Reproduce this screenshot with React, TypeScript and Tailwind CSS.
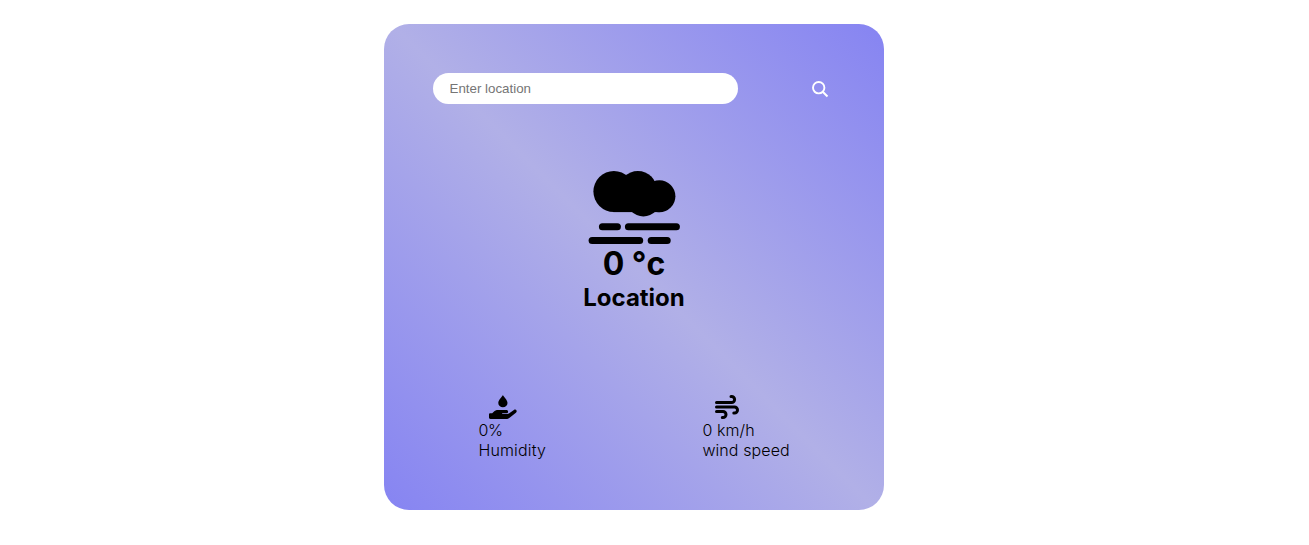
function CloudIcon() {
  return (
    <svg width="92" height="74" viewBox="0 0 92 74" fill="currentColor" aria-hidden="true">
      <g transform="translate(0.4 0)">
        <circle cx="25.5" cy="20.5" r="20.5" />
        <circle cx="49.5" cy="19" r="19" />
        <circle cx="71" cy="25.2" r="16" />
        <circle cx="55" cy="28" r="17.4" />
        <rect x="25" y="20" width="46" height="21.1" />
        <rect x="10.5" y="52.3" width="22" height="7" rx="3.5" />
        <rect x="36.5" y="52.3" width="55" height="7" rx="3.5" />
        <rect x="0.2" y="66" width="54.6" height="7" rx="3.5" />
        <rect x="59.3" y="66" width="23" height="7" rx="3.5" />
      </g>
    </svg>
  );
}

function SearchIcon() {
  return (
    <svg width="17" height="17" viewBox="0 0 17 17" fill="none" stroke="currentColor" aria-hidden="true">
      <circle cx="6.7" cy="6.7" r="5.7" strokeWidth="1.9" />
      <path d="M10.7 10.7 15.5 15.5" strokeWidth="2" />
    </svg>
  );
}

function HumidityIcon() {
  return (
    <svg className="ml-[11px] h-6 w-7" viewBox="0 0 28 24" fill="currentColor" aria-hidden="true">
      <path d="M13.9 0C14.6 1.4 18.5 5.2 18.5 7.9a4.6 4.3 0 0 1-9.2 0C9.3 5.2 13.2 1.4 13.9 0Z" />
      <path d="M1.4 18.2H3.2L5.3 16.3C6.4 15.4 7.6 15 9 15H17.2C18.4 15 19.1 15.7 19.1 16.7S18.3 18.2 17.2 18.2H13.2V18.9H18.2C19 18.9 19.7 18.7 20.3 18.2L24.9 15C26 14.3 27.1 14.6 27.5 15.4 27.9 16.2 27.7 17 26.9 17.7L20.6 22.7C19.6 23.5 18.5 24 17.2 24H1.4C.5 24 0 23.5 0 22.6V19.6C0 18.7.5 18.2 1.4 18.2Z" />
    </svg>
  );
}

function WindIcon() {
  return (
    <svg
      className="ml-[13px] h-6 w-6"
      viewBox="0 0 24 24"
      fill="none"
      stroke="currentColor"
      strokeWidth="3"
      strokeLinecap="round"
      strokeLinejoin="round"
      aria-hidden="true"
    >
      <path d="M1.5 7.5H16.6a3 3 0 0 0 0-6H16" />
      <path d="M1.5 12H19.5a3 3 0 0 1 0 6H18.8" />
      <path d="M1.5 16.5H8a3 3 0 0 1 0 6H7.3" />
    </svg>
  );
}

export default function App() {
  return (
    <div className="flex h-[545px] w-full bg-white pl-[384px] pt-6 text-black">
      <main className="flex h-[486px] w-[500px] flex-col rounded-[25px] bg-[linear-gradient(45deg,#8684f2_0%,#b1b0e7_50%,#8684f2_100%)] pt-[49px] font-['Inter',sans-serif]">
        <div className="flex h-[31px] items-center pl-[49px]">
          <input
            type="text"
            placeholder="Enter location"
            className="h-[31px] w-[305px] rounded-full bg-white pl-[16.5px] pr-4 font-['Liberation_Sans',sans-serif] text-[13.333px] outline-none placeholder:text-[#757575]"
          />
          <button type="button" aria-label="Search" className="ml-[74px] mt-px text-white">
            <SearchIcon />
          </button>
        </div>
        <section className="mt-[67px] flex flex-col items-center">
          <CloudIcon />
          <h1 className="-mt-px text-[32px] font-bold leading-[39px]">0 °c</h1>
          <h2 className="text-[24px] font-bold leading-[29px]">Location</h2>
        </section>
        <section className="mt-[83px] flex pl-[94.4px] text-base font-light leading-5">
          <div className="w-[224px]">
            <HumidityIcon />
            <p className="mt-px tracking-[-0.02em]">0%</p>
            <p className="tracking-[0.01em]">Humidity</p>
          </div>
          <div>
            <WindIcon />
            <p className="mt-px tracking-[0.006em]">0 km/h</p>
            <p className="tracking-[0.006em]">wind speed</p>
          </div>
        </section>
      </main>
    </div>
  );
}
